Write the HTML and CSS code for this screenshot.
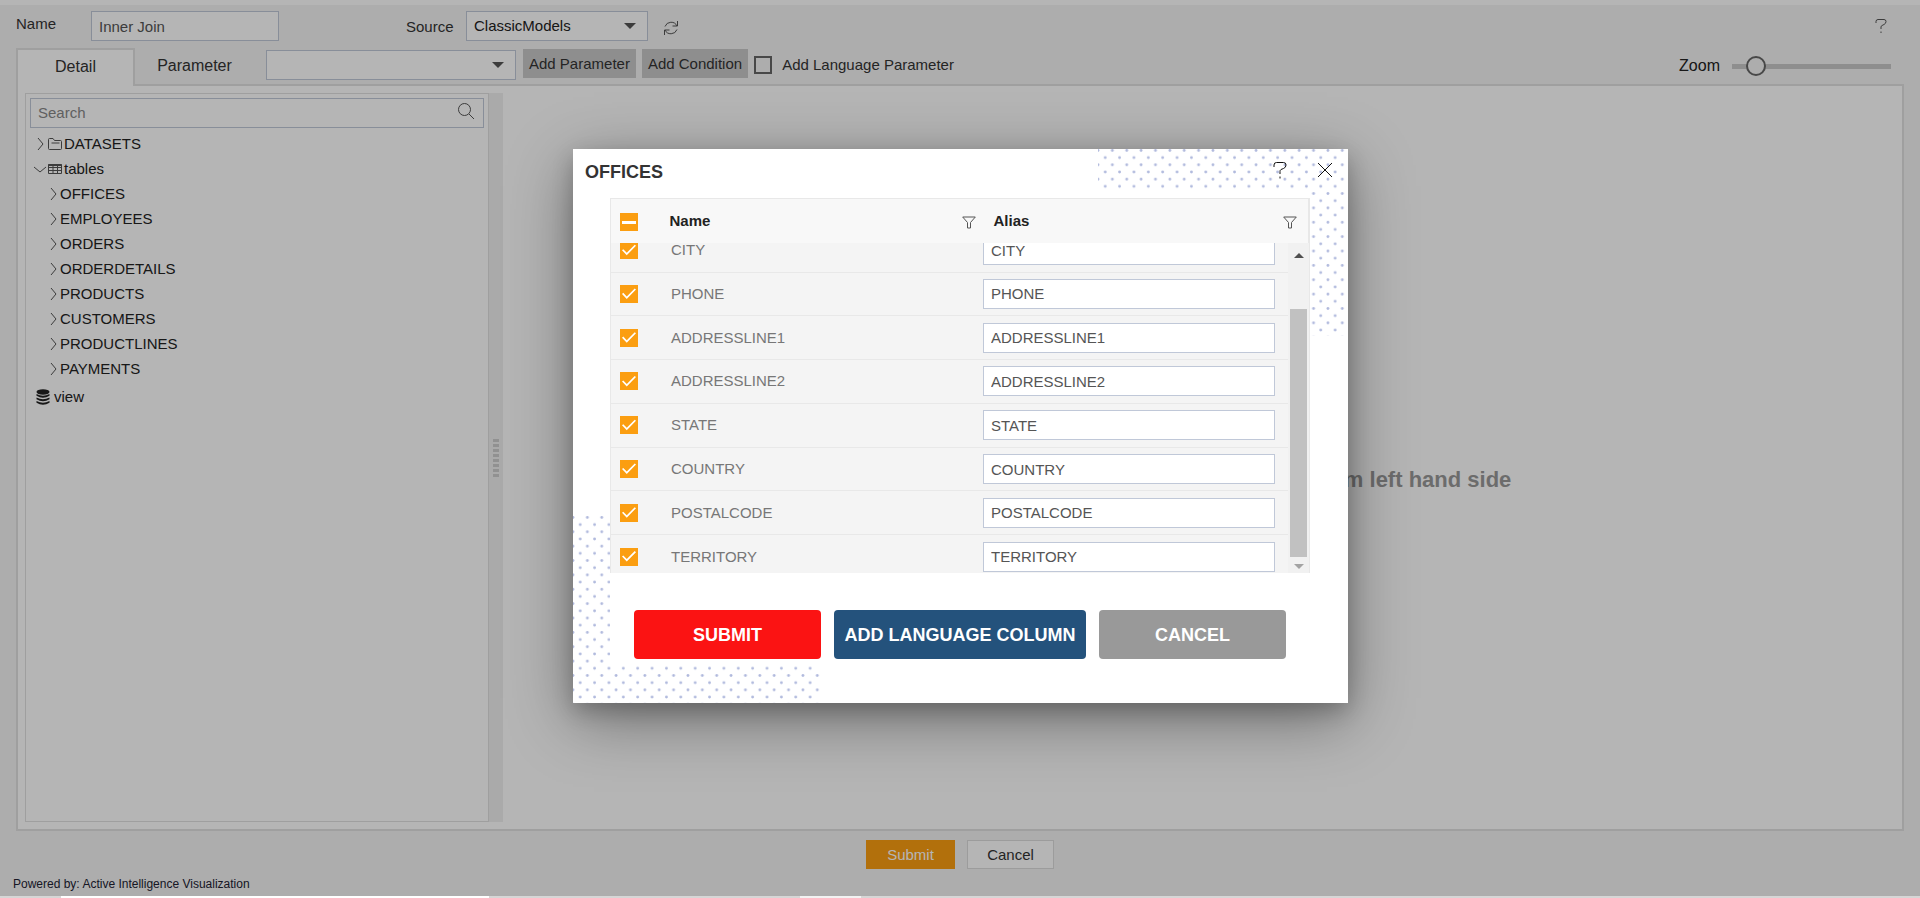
FILE: index.html
```html
<!DOCTYPE html>
<html lang="en">
<head>
<meta charset="utf-8">
<title>Inner Join</title>
<link rel="stylesheet" href="styles.css">
</head>
<body>
<div class="app">
  <header class="topbar">
    <label class="name-label" for="ds-name">Name</label>
    <input class="field name-field" id="ds-name" type="text" value="Inner Join">
    <label class="source-label" for="ds-source">Source</label>
    <span class="select-wrap source-select">
      <select class="field" id="ds-source"><option>ClassicModels</option></select>
      <svg class="caret" viewBox="0 0 12 6"><path d="M0 0h12L6 6z"/></svg>
    </span>
    <button class="icon-btn" aria-label="Refresh">
      <svg width="16" height="16" viewBox="0 0 16 16"><path d="M14.500 1v5h-5M1.500 15v-5h5M14 6A6.500 6.500 0 0 0 2 6.500M2 10a6.500 6.500 0 0 0 12-.5"/></svg>
    </button>
    <button class="icon-btn help" aria-label="Help">
      <svg width="14" height="16" viewBox="0 0 14 16"><path d="M2 5V3.500Q2 1.500 4 1.500h6Q12 1.500 12 3.500T10 6.500L8 7.500Q7 8 7 9v2M7 13.500v1.500"/></svg>
    </button>
  </header>

  <div class="toolbar">
    <nav class="tabs">
      <button class="tab active">Detail</button>
      <button class="tab">Parameter</button>
    </nav>
    <span class="select-wrap param-select">
      <select class="field" aria-label="Parameter type"><option></option></select>
      <svg class="caret" viewBox="0 0 12 6"><path d="M0 0h12L6 6z"/></svg>
    </span>
    <button class="grey-btn">Add Parameter</button>
    <button class="grey-btn">Add Condition</button>
    <label class="lang"><input class="box" type="checkbox">Add Language Parameter</label>
    <label class="zoom">Zoom <input class="slider" type="range" min="0" max="100" value="10"></label>
  </div>

  <main class="panel">
    <aside class="tree">
      <div class="search">
        <input class="field" type="search" placeholder="Search" aria-label="Search">
        <svg class="glass" width="18" height="18" viewBox="0 0 18 18"><circle cx="7.500" cy="7.500" r="6"/><path d="M12 12l5 5"/></svg>
      </div>
      <ul class="nodes">
        <li><svg class="chev" viewBox="0 0 12 14"><path d="M4 1l5 6-5 6"/></svg><svg class="ico" viewBox="0 0 14 14"><path d="M1.500 12.500q-1 0-1-1v-9q0-1 1-1H5l1.500 2h6q1 0 1 1v7q0 1-1 1zM3.500 6h8"/></svg><span>DATASETS</span></li>
        <li><svg class="chev" viewBox="0 0 12 14"><path d="M0 5l6 5 6-5"/></svg><svg class="ico" viewBox="0 0 14 14"><path d="M.5 2.500h13v9H.5zM.5 5.500h13M.5 8.500h13M5 2v9.500M9.500 2v9.500"/><path d="M.5 3h13" stroke-width="2"/></svg><span>tables</span></li>
        <li class="child"><svg class="chev" viewBox="0 0 12 14"><path d="M3 1l5 6-5 6"/></svg><span>OFFICES</span></li>
        <li class="child"><svg class="chev" viewBox="0 0 12 14"><path d="M3 1l5 6-5 6"/></svg><span>EMPLOYEES</span></li>
        <li class="child"><svg class="chev" viewBox="0 0 12 14"><path d="M3 1l5 6-5 6"/></svg><span>ORDERS</span></li>
        <li class="child"><svg class="chev" viewBox="0 0 12 14"><path d="M3 1l5 6-5 6"/></svg><span>ORDERDETAILS</span></li>
        <li class="child"><svg class="chev" viewBox="0 0 12 14"><path d="M3 1l5 6-5 6"/></svg><span>PRODUCTS</span></li>
        <li class="child"><svg class="chev" viewBox="0 0 12 14"><path d="M3 1l5 6-5 6"/></svg><span>CUSTOMERS</span></li>
        <li class="child"><svg class="chev" viewBox="0 0 12 14"><path d="M3 1l5 6-5 6"/></svg><span>PRODUCTLINES</span></li>
        <li class="child"><svg class="chev" viewBox="0 0 12 14"><path d="M3 1l5 6-5 6"/></svg><span>PAYMENTS</span></li>
        <li class="view"><svg class="db" width="14" height="16" viewBox="0 0 14 16"><ellipse cx="7" cy="3" rx="6.500" ry="2.700"/><path d="M.5 5q6.500 3.500 13 0v1.800q-6.500 4-13 0zM.5 8.500q6.500 3.500 13 0v1.800q-6.500 4-13 0zM.5 12q6.500 3.500 13 0v1.800q-6.500 4-13 0z"/></svg><span>view</span></li>
      </ul>
    </aside>
    <div class="splitter"><span class="grip"></span></div>
    <section class="canvas"><p>Drag and drop tables/views on this page from left hand side</p></section>
  </main>

  <div class="actions">
    <button class="primary">Submit</button>
    <button class="secondary">Cancel</button>
  </div>
  <footer class="powered">Powered by: Active Intelligence Visualization</footer>
</div>

<div class="overlay">
  <div class="dialog" role="dialog" aria-labelledby="dlg-title">
    <svg class="dots top" width="250" height="187">
      <defs><pattern id="dots" width="14.370" height="14.370" patternUnits="userSpaceOnUse"><circle cx="0" cy="1.500" r="1.400"/><circle cx="14.370" cy="1.500" r="1.400"/><circle cx="7.200" cy="8.700" r="1.400"/></pattern></defs>
      <rect width="250" height="187" fill="url(#dots)"/>
    </svg>
    <svg class="dots bottom" width="250" height="187"><rect width="250" height="187" fill="url(#dots)"/></svg>
    <div class="dialog-head">
      <h2 id="dlg-title">OFFICES</h2>
      <button class="head-btn" aria-label="Help"><svg width="16" height="18" viewBox="0 0 16 18"><path d="M2 6V4Q2 1.500 4.500 1.500h7Q14 1.500 14 4T11.500 7.500L9 8.500Q8 9 8 10.500V13M8 15.500v2"/></svg></button>
      <button class="head-btn" aria-label="Close"><svg width="16" height="16" viewBox="0 0 16 16"><path d="M1 1l14 14M15 1L1 15"/></svg></button>
    </div>
    <div class="dialog-body">
      <div class="grid">
        <table class="grid-head">
          <colgroup><col class="c-check"><col class="c-name"><col></colgroup>
          <tr>
            <th><input class="tick some" type="checkbox" aria-label="Select all"></th>
            <th><div class="th"><span>Name</span><button class="filter" aria-label="Filter by name"><svg width="14" height="13" viewBox="0 0 14 13"><path d="M.7 1h12.600L8.500 6.500V12h-3V6.500z"/></svg></button></div></th>
            <th><div class="th"><span>Alias</span><button class="filter" aria-label="Filter by alias"><svg width="14" height="13" viewBox="0 0 14 13"><path d="M.7 1h12.600L8.500 6.500V12h-3V6.500z"/></svg></button></div></th>
          </tr>
        </table>
        <div class="viewport">
          <table class="rows">
            <colgroup><col class="c-check"><col class="c-name"><col></colgroup>
            <tr><td><input class="tick" type="checkbox" checked aria-label="Select CITY"></td><td>CITY</td><td><input class="field" type="text" aria-label="Alias of CITY" value="CITY"></td></tr>
            <tr><td><input class="tick" type="checkbox" checked aria-label="Select PHONE"></td><td>PHONE</td><td><input class="field" type="text" aria-label="Alias of PHONE" value="PHONE"></td></tr>
            <tr><td><input class="tick" type="checkbox" checked aria-label="Select ADDRESSLINE1"></td><td>ADDRESSLINE1</td><td><input class="field" type="text" aria-label="Alias of ADDRESSLINE1" value="ADDRESSLINE1"></td></tr>
            <tr><td><input class="tick" type="checkbox" checked aria-label="Select ADDRESSLINE2"></td><td>ADDRESSLINE2</td><td><input class="field" type="text" aria-label="Alias of ADDRESSLINE2" value="ADDRESSLINE2"></td></tr>
            <tr><td><input class="tick" type="checkbox" checked aria-label="Select STATE"></td><td>STATE</td><td><input class="field" type="text" aria-label="Alias of STATE" value="STATE"></td></tr>
            <tr><td><input class="tick" type="checkbox" checked aria-label="Select COUNTRY"></td><td>COUNTRY</td><td><input class="field" type="text" aria-label="Alias of COUNTRY" value="COUNTRY"></td></tr>
            <tr><td><input class="tick" type="checkbox" checked aria-label="Select POSTALCODE"></td><td>POSTALCODE</td><td><input class="field" type="text" aria-label="Alias of POSTALCODE" value="POSTALCODE"></td></tr>
            <tr><td><input class="tick" type="checkbox" checked aria-label="Select TERRITORY"></td><td>TERRITORY</td><td><input class="field" type="text" aria-label="Alias of TERRITORY" value="TERRITORY"></td></tr>
          </table>
          <div class="scrollbar">
            <svg width="10" height="5" viewBox="0 0 10 5"><path d="M0 5h10L5 0z" fill="#505050"/></svg>
            <span class="thumb"></span>
            <svg width="10" height="5" viewBox="0 0 10 5"><path d="M0 0h10L5 5z" fill="#a3a3a3"/></svg>
          </div>
        </div>
      </div>
      <div class="dialog-actions">
        <button class="big red">SUBMIT</button>
        <button class="big blue">ADD LANGUAGE COLUMN</button>
        <button class="big grey">CANCEL</button>
      </div>
    </div>
  </div>
</div>
<div class="edge"><span class="edge-white"></span><span class="edge-light"></span></div>
</body>
</html>
```
FILE: styles.css
```css
* { box-sizing: border-box; }
body {
  margin: 0;
  min-height: 100vh;
  display: flex;
  flex-direction: column;
  background: #f4f4f4;
  color: #333;
  font: 15px/18px "Liberation Sans", Arial, sans-serif;
}
button, input, select { font: inherit; color: inherit; margin: 0; }
button { border: 0; background: none; padding: 0; }
ul, p, h2 { margin: 0; padding: 0; }
table { border-collapse: collapse; table-layout: fixed; width: 100%; }
svg { display: block; flex: none; fill: none; stroke: #555; }

.app {
  flex: 1;
  display: flex;
  flex-direction: column;
  border-top: 5px solid #fff;
}
.field {
  height: 30px;
  width: 100%;
  border: 1px solid #c0c8d8;
  border-radius: 0;
  background: #fff;
  color: #555;
  padding: 0 7px;
  appearance: none;
  outline: 0;
}
.topbar {
  display: flex;
  align-items: center;
  height: 42px;
  padding: 0 32px 0 16px;
}
.name-label { width: 75px; padding-bottom: 4px; }
.name-field { width: 188px; }
.source-label { margin-left: 127px; width: 60px; padding-top: 2px; }
.select-wrap { position: relative; display: block; }
.select-wrap .field { color: #222; }
.source-select { width: 182px; }
.caret {
  position: absolute;
  right: 12px;
  top: 12px;
  width: 12px;
  height: 6px;
  fill: #555;
  stroke: none;
}
.icon-btn { margin: 4px 0 0 15px; }
.help { margin: 0 0 0 auto; }

.toolbar {
  display: flex;
  align-items: flex-start;
  height: 37px;
  padding: 1px 29px 0 16px;
}
.tabs { display: flex; margin-right: 12px; }
.tab { width: 119px; height: 37px; font-size: 16px; padding-bottom: 2px; }
.tab.active {
  position: relative;
  z-index: 1;
  height: 38px;
  background: #fff;
  border: 2px solid #e1e1e1;
  border-bottom: 0;
  padding-bottom: 2px;
}
.param-select { width: 250px; margin: 2px 7px 0 0; }
.grey-btn {
  height: 29px;
  padding: 0 6px;
  margin: 1px 6px 0 0;
  background: #c9c9c9;
}
.lang { display: flex; align-items: center; gap: 10px; margin-top: 8px; }
.box {
  appearance: none;
  width: 18px;
  height: 18px;
  border: 2px solid #666;
}
.zoom {
  display: flex;
  align-items: center;
  gap: 12px;
  margin: 8px 0 0 auto;
  font-size: 16px;
  color: #222;
}
.slider { appearance: none; width: 159px; height: 20px; background: none; }
.slider::-webkit-slider-runnable-track { height: 5px; background: #c9c9c9; }
.slider::-webkit-slider-thumb {
  appearance: none;
  width: 20px;
  height: 20px;
  margin-top: -8px;
  border: 2px solid #666;
  border-radius: 50%;
  background: #f4f4f4;
}

.panel {
  flex: 1;
  display: flex;
  margin: 0 16px;
  padding: 7px;
  border: 2px solid #e1e1e1;
  background: #fff;
}
.tree { width: 464px; border: 1px solid #e1e1e1; padding: 4px; }
.search { position: relative; }
.search .field { padding-bottom: 2px; }
.search .field::placeholder { color: #888; }
.glass { position: absolute; right: 9px; top: 4px; }
.nodes { list-style: none; padding: 3px 4px; }
.nodes li { display: flex; align-items: center; height: 25px; color: #222; }
.nodes .child { padding-left: 14px; }
.nodes .view { margin-top: 3px; padding-left: 2px; }
.chev { width: 12px; height: 14px; margin-right: 2px; }
.ico { width: 14px; height: 14px; margin-right: 2px; }
.child .chev { margin-right: 0; }
.db { margin-right: 4px; fill: #222; stroke: none; }
.splitter {
  width: 14px;
  display: flex;
  align-items: center;
  justify-content: center;
  background: #f0f0f0;
}
.grip {
  width: 6px;
  height: 38px;
  background: repeating-linear-gradient(#ccc 0 3px, #f0f0f0 3px 5px);
}
.canvas {
  flex: 1;
  display: flex;
  align-items: center;
  justify-content: center;
  padding-top: 44px;
  font-size: 22px;
  font-weight: bold;
  line-height: 26px;
  color: #999;
}
.actions { display: flex; justify-content: center; gap: 12px; padding: 9px 0 7px; }
.actions button { height: 29px; }
.primary { width: 89px; background: #fb9e11; color: #fff; }
.secondary { width: 87px; background: #fff; border: 1px solid #dcdcdc; }
.powered { padding: 0 0 4px 13px; font-size: 12px; line-height: 16px; color: #223; }

.overlay {
  position: absolute;
  z-index: 2;
  inset: 0 0 2px 0;
  display: flex;
  justify-content: center;
  align-items: flex-start;
  padding: 149px 0 0 1px;
  background: rgba(0, 0, 0, 0.29);
  overflow: hidden;
}
.dialog {
  position: relative;
  width: 775px;
  padding-bottom: 37px;
  background: #fff;
  box-shadow: 0 16px 60px rgba(0, 0, 0, 0.4), 0 8px 20px rgba(0, 0, 0, 0.2);
}
.dots { position: absolute; stroke: none; fill: #b0b9dd; }
.dots.top { top: 0; right: 0; }
.dots.bottom { bottom: 0; left: 0; }
.dialog-head {
  position: relative;
  display: flex;
  align-items: center;
  height: 42px;
  padding: 4px 15px 0 12px;
}
.dialog-head h2 { flex: 1; font-size: 18px; line-height: 22px; }
.head-btn { margin-left: 29px; padding-bottom: 4px; }
.head-btn svg { stroke: #111; }
.dialog-body { position: relative; margin: 0 38px 0 37px; padding: 7px 0; background: #fff; }
.grid { background: #f4f4f4; }
.grid-head { background: #f8f8f8; border: 1px solid #e8e8e8; border-width: 1px 2px 0 1px; height: 45px; }
.grid th { padding: 0; text-align: left; color: #222; }
.c-check { width: 59px; }
.c-name { width: 313px; }
.th { display: flex; align-items: center; justify-content: space-between; padding-right: 7px; }
.grid th:last-child .th { padding: 0 11px; }
.filter { padding-top: 3px; }
.tick {
  appearance: none;
  display: block;
  width: 18px;
  height: 18px;
  margin-left: 9px;
  padding: 3px 2px;
  background: #fb9e11;
}
.tick:checked::before {
  content: "";
  display: block;
  height: 12px;
  background: #fff;
  clip-path: polygon(0 50%, 9% 41%, 34% 71%, 91% 4%, 100% 13%, 34% 92%);
}
.tick.some { margin-top: 2px; padding-top: 8px; }
.tick.some::before { content: ""; display: block; height: 3px; background: #fff; }
.viewport {
  display: flex;
  height: 330px;
  overflow: hidden;
  border: solid #e8e8e8;
  border-width: 0 1px;
}
.rows { flex: 1; height: 350px; margin-top: -14px; line-height: 14px; }
.rows tr { border-bottom: 1px solid #e8e8e8; }
.rows td { padding: 0; color: #777; }
.rows td:nth-child(2) { padding-left: 1px; }
.rows .field { display: block; width: 292px; }
.scrollbar {
  flex: none;
  width: 21px;
  display: flex;
  flex-direction: column;
  align-items: center;
  justify-content: space-between;
  padding: 10px 0 4px;
  background: #f1f1f1;
}
.scrollbar svg { stroke: none; }
.thumb { width: 17px; height: 248px; margin-top: 44px; background: #c1c1c1; }
.dialog-actions { display: flex; justify-content: center; gap: 13px; padding-top: 37px; }
.big {
  width: 187px;
  height: 49px;
  border-radius: 4px;
  color: #fff;
  font-size: 18px;
  font-weight: bold;
}
.red { background: #fb1313; }
.blue { width: 252px; background: #24527c; }
.grey { background: #999; }

.edge { display: flex; height: 2px; background: #d6d6d6; }
.edge-white { width: 428px; margin-left: 61px; background: #fff; }
.edge-light { width: 61px; margin-left: 311px; background: #f2f2f2; }
```
